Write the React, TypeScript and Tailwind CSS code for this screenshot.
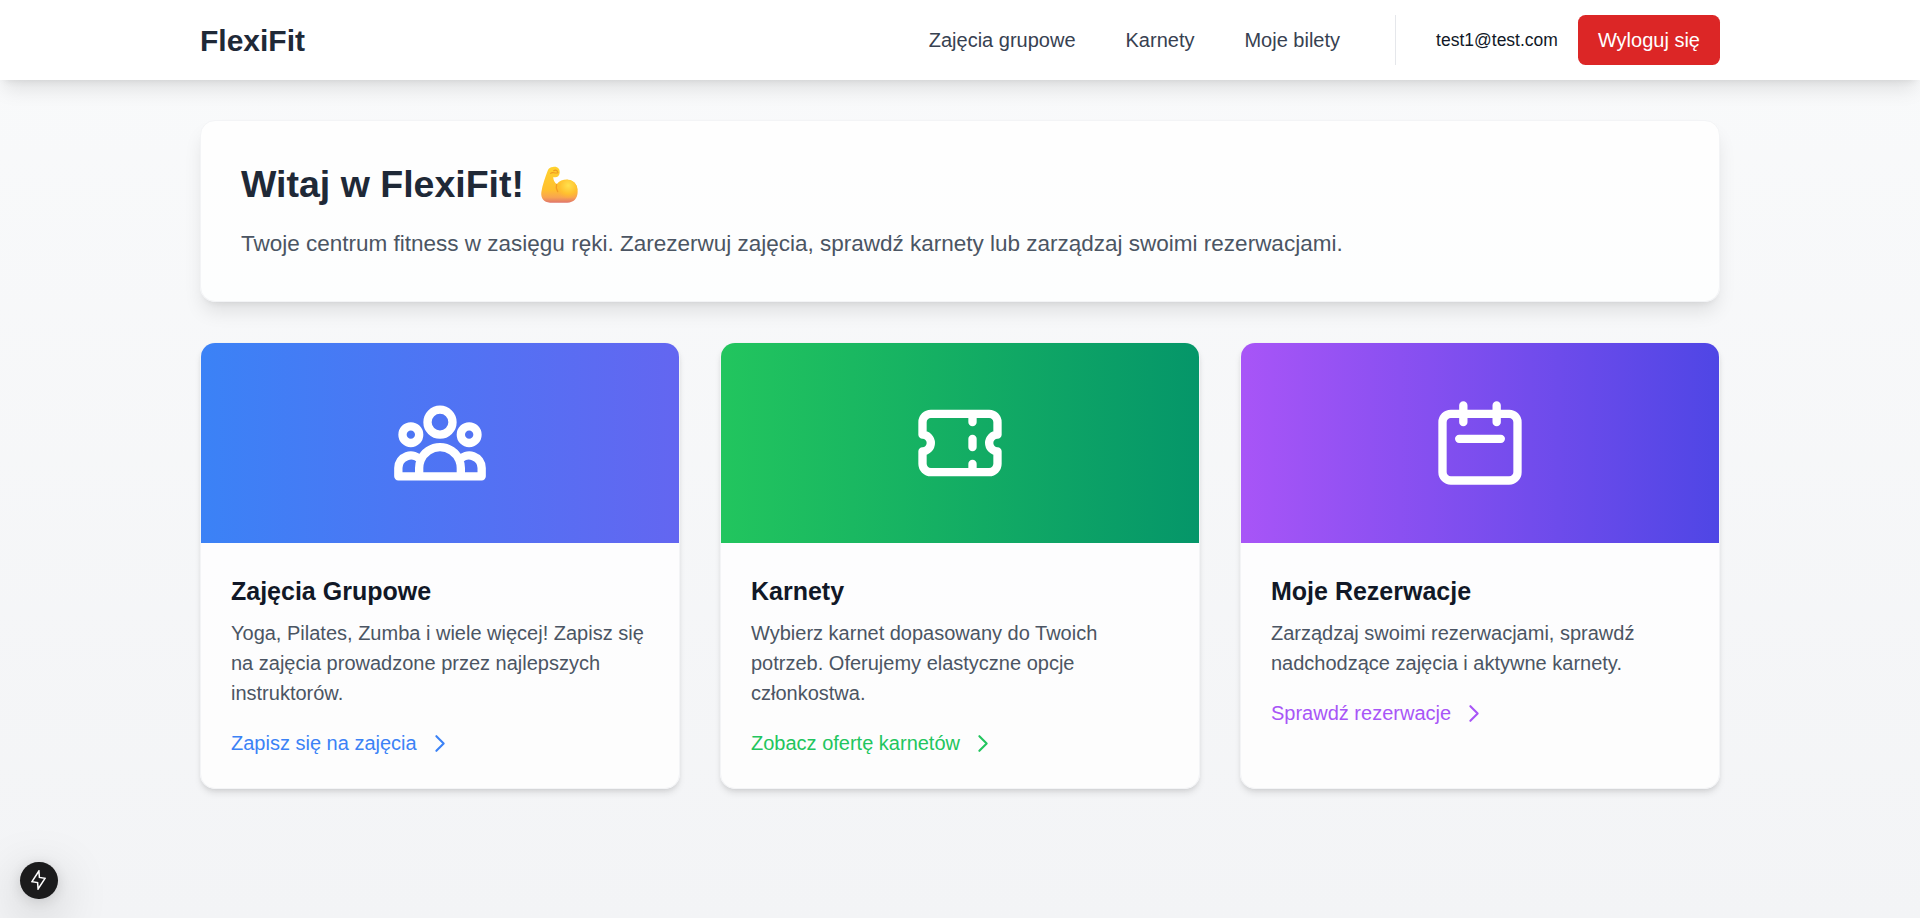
import React from "react";

type Card = {
  title: string;
  text: string;
  link: string;
  banner: string;
  accent: string;
  icon: string;
};

const cards: Card[] = [
  {
    title: "Zajęcia Grupowe",
    text: "Yoga, Pilates, Zumba i wiele więcej! Zapisz się na zajęcia prowadzone przez najlepszych instruktorów.",
    link: "Zapisz się na zajęcia",
    banner: "bg-[linear-gradient(to_right,#3b82f6,#6366f1)]",
    accent: "text-[#3b82f6]",
    icon: "M17 20h5v-2a3 3 0 00-5.356-1.857M17 20H7m10 0v-2c0-.656-.126-1.283-.356-1.857M7 20H2v-2a3 3 0 015.356-1.857M7 20v-2c0-.656.126-1.283.356-1.857m0 0a5.002 5.002 0 019.288 0M15 7a3 3 0 11-6 0 3 3 0 016 0zm6 3a2 2 0 11-4 0 2 2 0 014 0zM7 10a2 2 0 11-4 0 2 2 0 014 0z",
  },
  {
    title: "Karnety",
    text: "Wybierz karnet dopasowany do Twoich potrzeb. Oferujemy elastyczne opcje członkostwa.",
    link: "Zobacz ofertę karnetów",
    banner: "bg-[linear-gradient(to_right,#22c55e,#059669)]",
    accent: "text-[#22c55e]",
    icon: "M15 5v2m0 4v2m0 4v2M5 5a2 2 0 00-2 2v3a2 2 0 110 4v3a2 2 0 002 2h14a2 2 0 002-2v-3a2 2 0 110-4V7a2 2 0 00-2-2H5z",
  },
  {
    title: "Moje Rezerwacje",
    text: "Zarządzaj swoimi rezerwacjami, sprawdź nadchodzące zajęcia i aktywne karnety.",
    link: "Sprawdź rezerwacje",
    banner: "bg-[linear-gradient(to_right,#a855f7,#4f46e5)]",
    accent: "text-[#a855f7]",
    icon: "M8 7V3m8 4V3m-9 8h10M5 21h14a2 2 0 002-2V7a2 2 0 00-2-2H5a2 2 0 00-2 2v12a2 2 0 002 2z",
  },
];

function StrokeIcon({ d, className }: { d: string; className: string }) {
  return (
    <svg className={className} fill="none" stroke="currentColor" viewBox="0 0 24 24">
      <path strokeLinecap="round" strokeLinejoin="round" strokeWidth={2} d={d} />
    </svg>
  );
}

function FlexedArm() {
  return (
    <svg className="mt-[3px] ml-2.5 size-[50px] shrink-0" viewBox="0 0 150 150" role="img" aria-label="💪">
      <defs>
        <linearGradient id="arm" x1="0" y1="0" x2="0" y2="1">
          <stop offset="0" stopColor="#ffd22e" />
          <stop offset="0.65" stopColor="#ffbf2f" />
          <stop offset="0.85" stopColor="#f9a550" />
          <stop offset="1" stopColor="#e0766b" />
        </linearGradient>
        <radialGradient id="biceps" cx="0.55" cy="0.3" r="0.7">
          <stop offset="0" stopColor="#ffe14d" />
          <stop offset="0.6" stopColor="#ffc230" />
          <stop offset="1" stopColor="#ffb030" stopOpacity="0" />
        </radialGradient>
      </defs>
      <path
        fill="url(#arm)"
        d="M57 21C69 18 79 26 77 39C76 49 68 54 58 51C57 59 62 67 68 73C76 62 90 58 102 59C120 60 132 76 131 95C131 115 119 127 100 128H48C29 128 20 114 22 97C25 75 34 51 41 32C44 24 49 22 57 21Z"
      />
      <ellipse cx="100" cy="88" rx="30" ry="29" fill="url(#biceps)" />
      <path d="M68 73C66 79 65 85 71 95" fill="none" stroke="#f29b24" strokeWidth="4" strokeLinecap="round" />
      <path d="M50 40C56 34 62 42 72 38M59 32C65 29 70 31 71 36" fill="none" stroke="#ef9a22" strokeWidth="3.5" strokeLinecap="round" />
    </svg>
  );
}

function FeatureCard({ card }: { card: Card }) {
  return (
    <article className="overflow-hidden rounded-[15px] border border-[#f3f4f6] bg-white/80 shadow-[0_5px_7.5px_-1.25px_rgb(0_0_0/0.1),0_2.5px_5px_-2.5px_rgb(0_0_0/0.1)]">
      <div className={`flex h-[200px] items-center justify-center text-white ${card.banner}`}>
        <StrokeIcon d={card.icon} className="size-[100px]" />
      </div>
      <div className="p-[30px]">
        <h2 className="mb-[9px] pt-px text-[25px] leading-[35px] font-semibold text-[#111827]">{card.title}</h2>
        <p className="mb-5 text-[20px] leading-[30px] text-[#4b5563]">{card.text}</p>
        <a className={`flex items-center text-[20px] leading-[30px] ${card.accent}`}>
          {card.link}
          <StrokeIcon d="M9 5l7 7-7 7" className="ml-2.5 size-[25px]" />
        </a>
      </div>
    </article>
  );
}

export default function App() {
  return (
    <div className="flex h-[918px] flex-col overflow-hidden bg-[linear-gradient(to_bottom,#f9fafb,#f3f4f6)] font-['Liberation_Sans',Arial,sans-serif]">
      <header className="h-20 shrink-0 bg-white shadow-[0_12.5px_18.75px_-3.75px_rgb(0_0_0/0.1),0_5px_7.5px_-5px_rgb(0_0_0/0.1)]">
        <div className="mx-auto flex h-full w-[1520px] items-center justify-between">
          <span className="pt-0.5 text-[30px] leading-10 font-bold text-[#1f2937]">FlexiFit</span>
          <div className="flex items-center">
            <nav className="flex gap-[50px] text-[20px] leading-[30px] text-[#374151]">
              <a>Zajęcia grupowe</a>
              <a>Karnety</a>
              <a>Moje bilety</a>
            </nav>
            <div className="ml-[55px] flex items-center gap-5 border-l border-[#e5e7eb] pl-10">
              <span className="text-[17.5px] leading-[25px] text-[#111827]">test1@test.com</span>
              <button className="rounded-[7.5px] bg-[#dc2626] px-5 py-2.5 text-[20px] leading-[30px] text-white">
                Wyloguj się
              </button>
            </div>
          </div>
        </div>
      </header>

      <main className="mx-auto w-[1520px] pt-10">
        <section className="mb-10 rounded-[15px] border border-[#f3f4f6] bg-white/80 p-10 shadow-[0_12.5px_18.75px_-3.75px_rgb(0_0_0/0.1),0_5px_7.5px_-5px_rgb(0_0_0/0.1)]">
          <h1 className="mb-5 flex h-[45px] items-center text-[37.5px] leading-[45px] font-bold text-[#1f2937]">
            <span className="pt-0.5">Witaj w FlexiFit!</span>
            <FlexedArm />
          </h1>
          <p className="text-[22.5px] leading-[35px] text-[#4b5563]">
            Twoje centrum fitness w zasięgu ręki. Zarezerwuj zajęcia, sprawdź karnety lub zarządzaj swoimi rezerwacjami.
          </p>
        </section>
        <div className="grid grid-cols-3 gap-10">
          {cards.map((card) => (
            <FeatureCard key={card.title} card={card} />
          ))}
        </div>
      </main>

      <div className="absolute top-[861.5px] left-5 flex size-[37.5px] items-center justify-center rounded-full bg-[#1b1b1c] text-white shadow-[0_13.75px_50px_rgb(0_0_0/0.25),0_2.5px_12.5px_rgb(0_0_0/0.12)]">
        <svg className="h-5 w-[15px]" viewBox="0 0 15 20" fill="none" stroke="currentColor" strokeWidth={1.5}>
          <path d="M7.9 1L1 11.7L6.6 12.6L7.1 19L14 8.3L8.4 7.4Z" />
        </svg>
      </div>
    </div>
  );
}
